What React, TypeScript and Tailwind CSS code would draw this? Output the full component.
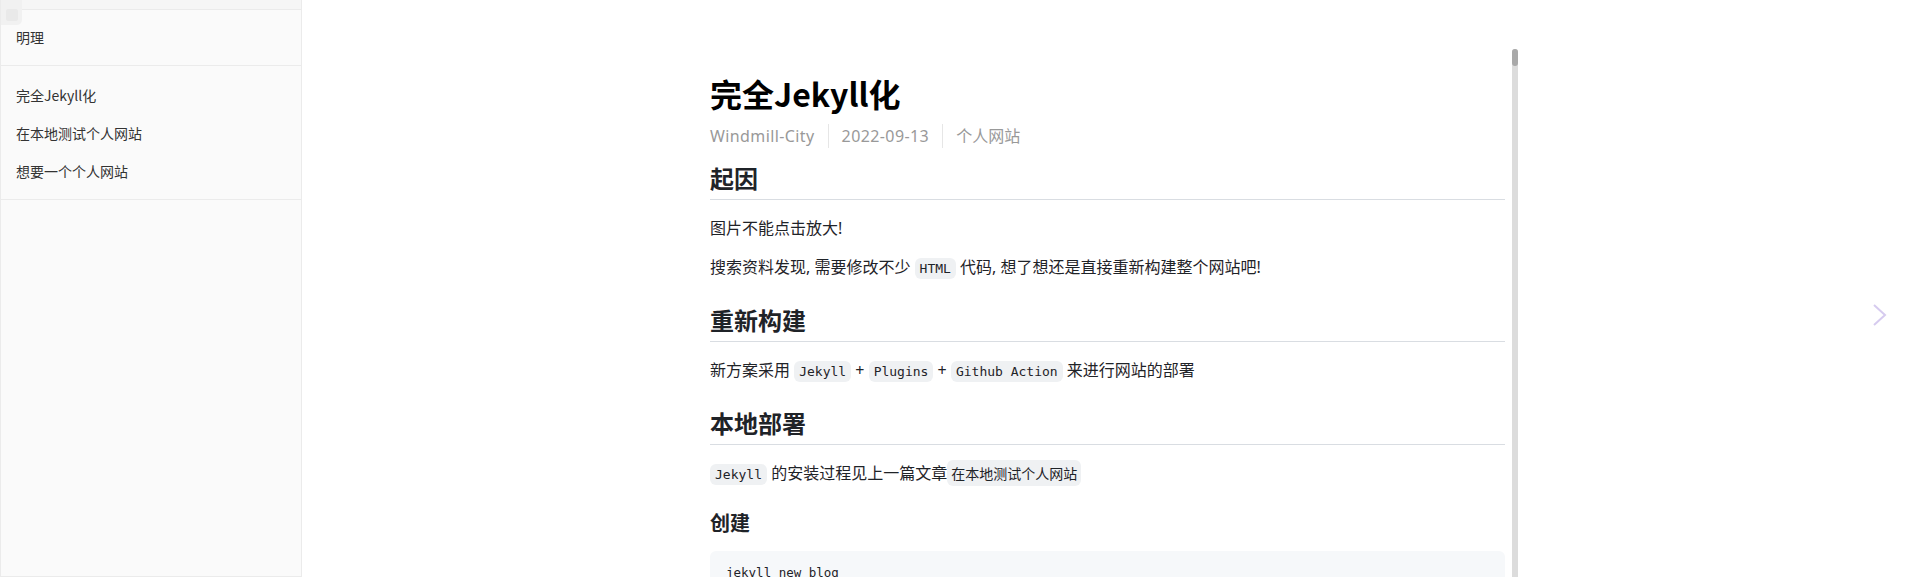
const sideItems = ["完全Jekyll化", "在本地测试个人网站", "想要一个个人网站"];

function Code({ children }: { children: React.ReactNode }) {
  return (
    <code className="rounded-[6px] bg-[#eff1f3] px-[5px] py-[3px] font-['DejaVu_Sans_Mono',monospace] text-[13px] text-[#1f2328]">
      {children}
    </code>
  );
}

function H2({ children }: { children: React.ReactNode }) {
  return (
    <h2 className="border-b border-[#d9dde2] pb-[6px] text-[24px] font-bold leading-[30px] text-[#1f2328]">
      {children}
    </h2>
  );
}

const body = "font-['Noto_Sans','Noto_Sans_CJK_SC',sans-serif] text-[16px] leading-[24px]";

export default function App() {
  return (
    <div className="relative flex h-[577px] w-[1920px] overflow-hidden bg-white font-['Noto_Sans_CJK_SC',sans-serif] text-[#1f2328]">
      {/* sidebar */}
      <aside className="relative flex h-[577px] w-[302px] shrink-0 flex-col border-x border-b border-[#ebebeb] bg-[#fafafa]">
        <div className="h-[10px] border-b border-[#ebebeb] bg-[#f6f6f6]" />
        <div className="flex h-[56px] items-center border-b border-[#ebebeb] px-[15px] text-[14px] text-[#333]">
          明理
        </div>
        <ul className="border-b border-[#ebebeb] pt-[10px] pb-[9px]">
          {sideItems.map((t) => (
            <li key={t} className="flex h-[38px] items-center px-[15px] text-[14px] text-[#333]">
              {t}
            </li>
          ))}
        </ul>
        <div className="absolute left-0 top-0 flex h-[25px] w-[21px] items-end justify-end rounded-br-[5px] bg-[#f1f1f1] p-[4px]">
          <div className="h-[12px] w-[12px] rounded-[2px] bg-[#e9e9e9]" />
        </div>
      </aside>

      {/* main */}
      <main className="flex flex-1 pl-[408px] pt-[49px]">
        <article className="w-[795px] pt-[24px]">
          <h1 className="text-[32px] font-bold leading-[40px] text-black">完全Jekyll化</h1>
          <div className="mt-[11px] flex items-center font-['Noto_Sans','Noto_Sans_CJK_SC',sans-serif] text-[16px] leading-[24px] text-[#999]">
            <span className="pr-[13px] tracking-[0.4px]">Windmill-City</span>
            <span className="border-l border-[#e6e6e6] px-[13px] tracking-[0.4px]">2022-09-13</span>
            <span className="border-l border-[#e6e6e6] pl-[13px]">个人网站</span>
          </div>

          <div className="mt-[15px]">
            <H2>起因</H2>
          </div>
          <div className={body}>
            <p className="mt-[16px]">图片不能点击放大!</p>
            <p className="mt-[15px]">
              搜索资料发现, 需要修改不少 <Code>HTML</Code> 代码, 想了想还是直接重新构建整个网站吧!
            </p>
          </div>

          <div className="mt-[24px]">
            <H2>重新构建</H2>
          </div>
          <p className={`mt-[16px] ${body}`}>
            新方案采用 <Code>Jekyll</Code> + <Code>Plugins</Code> + <Code>Github Action</Code> 来进行网站的部署
          </p>

          <div className="mt-[24px]">
            <H2>本地部署</H2>
          </div>
          <p className={`mt-[16px] ${body}`}>
            <Code>Jekyll</Code> 的安装过程见上一篇文章
            <span className="rounded-[6px] bg-[#eff1f3] px-[4px] py-[3px] font-['Noto_Sans_CJK_SC',sans-serif] text-[14px] text-[#1f2328]">
              在本地测试个人网站
            </span>
          </p>

          <h3 className="mt-[23px] text-[20px] font-bold leading-[25px]">创建</h3>
          <pre className="mt-[16px] rounded-[6px] bg-[#f6f8fa] px-[16px] pt-[12px] pb-[16px] font-['DejaVu_Sans_Mono',monospace] text-[12.5px] leading-[20px] text-[#1f2328]">
            jekyll new blog
          </pre>
        </article>

        <div className="ml-[7px] h-[600px] w-[6px] shrink-0 rounded-full bg-[#dcdcdc]">
          <div className="h-[17px] w-[6px] rounded-full bg-[#a9a9a9]" />
        </div>
      </main>

      <svg
        className="absolute left-[1870px] top-[302px]"
        width="20"
        height="26"
        viewBox="0 0 20 26"
        fill="none"
        stroke="#d6cbef"
        strokeWidth="2"
      >
        <path d="M4 3 L15 13 L4 23" />
      </svg>
    </div>
  );
}
